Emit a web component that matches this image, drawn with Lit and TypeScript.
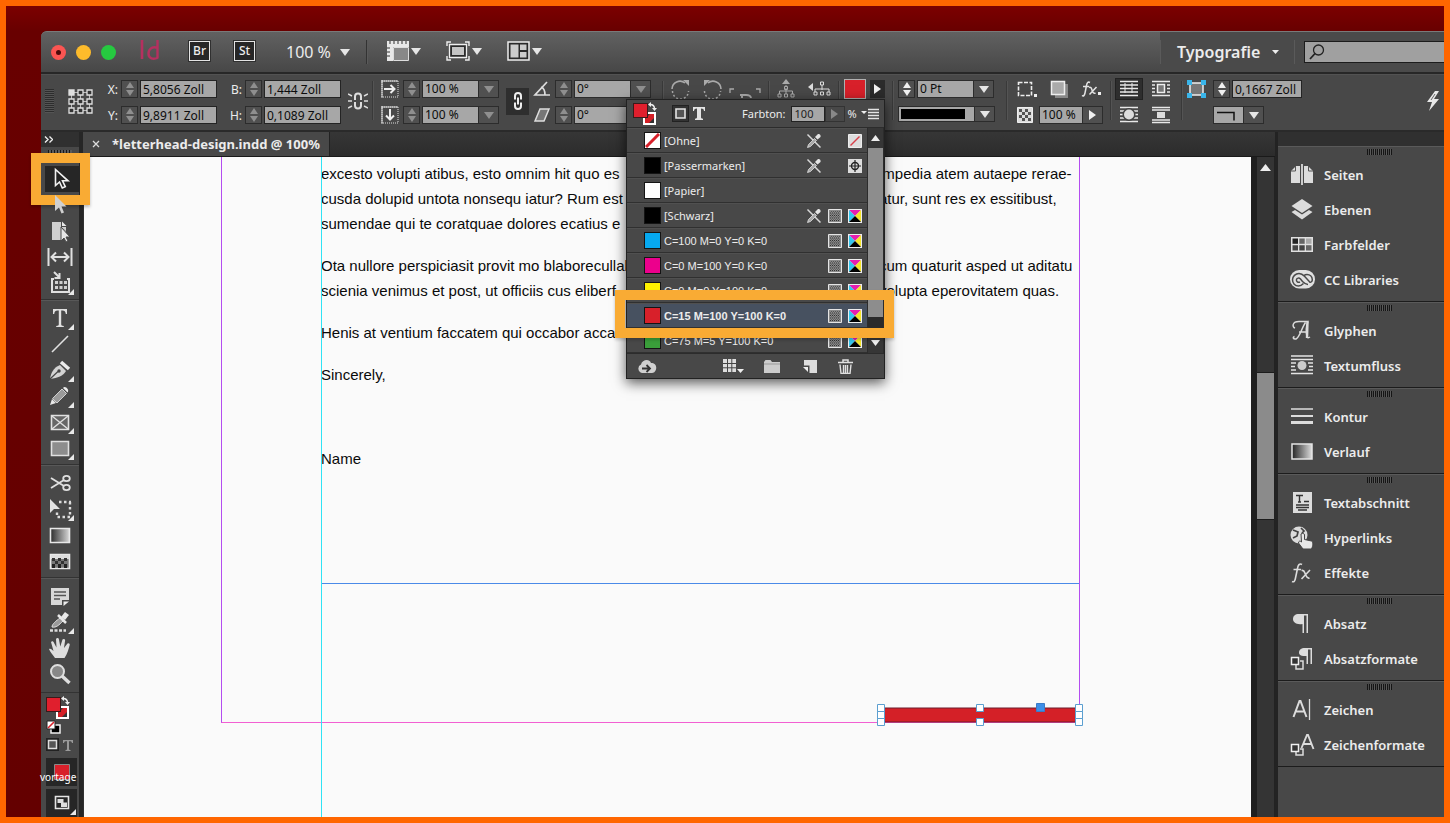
import { LitElement, html, svg, css, SVGTemplateResult, TemplateResult } from "lit";
import { customElement, state } from "lit/decorators.js";
import { classMap } from "lit/directives/class-map.js";
import { styleMap } from "lit/directives/style-map.js";

const icon = (w: number, h: number, body: SVGTemplateResult) =>
  html`<svg width=${w} height=${h} viewBox="0 0 ${w} ${h}" fill="none" stroke="none" aria-hidden="true">${body}</svg>`;

const L = "#dcdcdc";
const corner = svg`<path d="M29 19v6h-6z" fill="#e8e8e8"/>`;

/* ---------- shared glyphs ---------- */
const triDown = (c = "#e6e6e6") => icon(10, 8, svg`<path d="M0 1h10L5 8z" fill=${c}/>`);
const triRight = (c = "#f0f0f0") => icon(7, 10, svg`<path d="M0 0l7 5-7 5z" fill=${c}/>`);
const fillStroke = svg`
  <path d="M10 10h13v13H10z" fill="#fff"/><path d="M12 12h9v9h-9z" fill="#333"/>
  <path d="M12 21v-4l5-5h4v4l-5 5z" fill="#d42027"/>
  <path d="M0 1h15v15H0z" fill="#3a1a1a"/><path d="M1 2h13v13H1z" fill="#e01f2d"/>
  <path d="M17 2.500c3 0 4.500 1.500 4.500 4.500" stroke="#eee" stroke-width="1.500"/><path d="M18 0v5l-3-2.500zM19 6h5l-2.500 3z" fill="#eee"/>`;

/* ---------- toolbox ---------- */
const tools: Record<string, SVGTemplateResult> = {
  Auswahl: svg`<path d="M10.500 3.500v16l4-3.500 2.800 6 3-1.400-2.800-5.800h5.500z" fill="#222" stroke="#f2f2f2" stroke-width="1.600"/>`,
  Direktauswahl: svg`<path d="M10 3v16l4-3.500 2.500 6 2.500-1-2.500-6h5z" fill="#d0d0d0"/>`,
  Seite: svg`<path d="M7 4h9v5h5v4l-6-5v14H7z" fill="#cfcfcf"/><path d="M7 4h9v6l5 3-5 9H7z" fill="#cfcfcf"/><path d="M17 3.500l4.500 4.500H17z" fill="#e8e8e8"/><path d="M16 9v14l3-3 2 4 2-1-2-4h4z" fill="#e6e6e6" stroke="#484848"/>`,
  Lücke: svg`<path d="M3.500 4v18M26.500 4v18" stroke="#e0e0e0" stroke-width="2"/><path d="M8 13h14" stroke="#e0e0e0" stroke-width="2"/><path d="M11 8.500L6.500 13l4.500 4.500M19 8.500l4.500 4.500-4.500 4.500" stroke="#e0e0e0" stroke-width="2"/>`,
  Inhaltsaufnahme: svg`<path d="M9 2l5 5M14.500 3v5h-5" stroke="#e0e0e0" stroke-width="2"/><path d="M9 9H7v13h17V9h-2" stroke="#e0e0e0" stroke-width="2"/><path d="M10 11h3v3h-3zM14.500 11h3v3h-3zM19 11h3v3h-3zM10 16h3v3h-3zM14.500 16h3v3h-3zM19 16h3v3h-3z" fill="#cfcfcf"/>${corner}`,
  Text: svg`<path d="M8 4h14v5h-1.200c-.4-2.600-1.300-3.400-3.300-3.500h-1.300v13.500c0 1.500.5 1.800 2.600 2v1h-7.600v-1c2.100-.2 2.600-.5 2.600-2V5.500h-1.300c-2 .1-2.900.9-3.300 3.500H8z" fill="#e0e0e0"/>${corner}`,
  Linie: svg`<path d="M7 21L23 5" stroke="#e0e0e0" stroke-width="1.600"/>`,
  Zeichenstift: svg`<path d="M5 22c1-6 3-11 10-14l6 6c-3 5-8 7-16 8z" fill="#d2d2d2"/><path d="M16 5l8 7" stroke="#ececec" stroke-width="3.500"/><path d="M5 22l8-7.500" stroke="#444" stroke-width="1.200"/><circle cx="14" cy="14" r="1.700" fill="#444"/>${corner}`,
  Buntstift: svg`<path d="M5 22l2-6 4 4z" fill="#e8e8e8"/><path d="M7.500 15.500L17 6l4.500 4.500-9.500 9.500z" fill="#9a9a9a" stroke="#cfcfcf"/><path d="M18 5c2-3 7 2 4.500 4.500z" fill="#ececec"/>${corner}`,
  Rechteckrahmen: svg`<path d="M6.500 6.500h17v14h-17z" fill="#666" stroke="#e0e0e0" stroke-width="1.600"/><path d="M7 7l16 13M23 7L7 20" stroke="#e0e0e0" stroke-width="1.400"/>${corner}`,
  Rechteck: svg`<path d="M6.500 6.500h17v14h-17z" fill="#8d8d8d" stroke="#e0e0e0" stroke-width="1.600"/>${corner}`,
  Schere: svg`<path d="M6 8l13 8M6 18l13-8" stroke="#e0e0e0" stroke-width="1.800"/><ellipse cx="21.500" cy="8.500" rx="3.300" ry="2.600" stroke="#e0e0e0" stroke-width="1.800"/><ellipse cx="21.500" cy="17.500" rx="3.300" ry="2.600" stroke="#e0e0e0" stroke-width="1.800"/>`,
  Transformieren: svg`<path d="M5 3v14l4-4h6z" fill="#e4e4e4"/><path d="M14 6h12M25 6v15H12v-6" stroke="#dcdcdc" stroke-width="2.400" stroke-dasharray="2.500 2.500"/>${corner}`,
  Verlaufsfarbfeld: svg`<defs><linearGradient id="g1"><stop stop-color="#2b2b2b"/><stop offset="1" stop-color="#d8d8d8"/></linearGradient></defs><path d="M5.500 6.500h19v14h-19z" fill="url(#g1)" stroke="#e8e8e8" stroke-width="1.600"/>`,
  "Weiche Verlaufskante": svg`<path d="M5.500 6.500h19v14h-19z" fill="#777" stroke="#e8e8e8" stroke-width="1.600"/><path d="M6 7h18v4H6z" fill="#ddd"/><path d="M7 10h3v3H7zM13 10h3v3h-3zM19 10h3v3h-3zM10 13h3v3h-3zM16 13h3v3h-3z" fill="#333"/><path d="M7 16h3v4H7zM13 16h3v4h-3zM19 16h3v4h-3z" fill="#222"/>`,
  Notiz: svg`<path d="M6 5h18v12h-7v5H6z" fill="#d8d8d8"/><path d="M18.500 18.500H24l-5.500 4.500z" fill="#ececec"/><path d="M9 9h12M9 12.500h12M9 16h6" stroke="#555" stroke-width="1.500"/>`,
  Pipette: svg`<path d="M7 18c0-3 4-6 8-9l3 3c-4 4-7 7-11 6z" fill="#9a9a9a" stroke="#e0e0e0"/><path d="M13 6l8 8" stroke="#e8e8e8" stroke-width="2.500"/><path d="M16 8l4-5 4 3-4 5z" fill="#e8e8e8"/><path d="M5 21.500h16" stroke="#dcdcdc" stroke-width="2.500" stroke-dasharray="3 1.500"/>${corner}`,
  Hand: svg`<path d="M10 23c-2-3-5-6-6-9 1.500-1 3 .5 4.500 2L6 7c1-1.500 2.500-.8 2.800.5l2.700 5L11 4c.8-1.500 2.700-1.200 2.900.3l1.400 7.200L17.500 4.500c1-1.200 2.800-.5 2.600 1L19 13l3.500-4.500c1.300-.8 2.600.3 2.200 1.500-1.200 4-2.200 9-5.200 13z" fill="#dedede"/>`,
  Zoom: svg`<circle cx="12.500" cy="10.500" r="6.500" fill="#888" stroke="#dedede" stroke-width="2"/><path d="M17 15l7.500 7" stroke="#dedede" stroke-width="3.500"/>`,
};
const toolGroups = [
  ["Auswahl", "Direktauswahl", "Seite", "Lücke", "Inhaltsaufnahme"],
  ["Text", "Linie", "Zeichenstift", "Buntstift", "Rechteckrahmen", "Rechteck"],
  ["Schere", "Transformieren", "Verlaufsfarbfeld", "Weiche Verlaufskante"],
  ["Notiz", "Pipette", "Hand", "Zoom"],
];

/* ---------- dock panels ---------- */
const panels: [string, SVGTemplateResult][][] = [
  [
    ["Seiten", svg`<path d="M1 8l5-5h4v17H1zM23 8l-5-5h-4v17h9z" fill=${L}/><path d="M12 1v21" stroke="#eee" stroke-width="1.600"/><path d="M5.500 3v5H1M18.500 3v5H23" stroke="#555"/>`],
    ["Ebenen", svg`<path d="M12 1l10.500 7L12 15 1.500 8z" fill=${L}/><path d="M1.500 14l3.500-2 7 4.500 7-4.500 3.500 2L12 21.500z" fill=${L}/>`],
    ["Farbfelder", svg`<path d="M1 4h22v15H1z" fill="#e0e0e0"/><path d="M2.500 5.500H8v5.300H2.500z" fill="#222"/><path d="M9.300 5.500h5.400v5.300H9.300z" fill="#666"/><path d="M16 5.500h5.500v5.300H16z" fill="#aaa"/><path d="M2.500 12.200H8v5.300H2.500zM9.300 12.200h5.400v5.300H9.300z" fill="#444"/><path d="M16 12.200h5.500v5.300H16z" fill="#666"/>`],
    ["CC Libraries", svg`<rect x="0" y="2" width="25" height="18.500" rx="9.200" fill="#e0e0e0"/><path d="M13.500 15.500c-1.500 1.500-3 2.500-5 2.500-3.500 0-6-2.800-6-6.200S5.500 5.500 9 5.500c2.300 0 4 1.200 5.500 2.800l5 5.500c1.200 1 3-.3 2.800-2.300-.2-3-2.500-5-5.300-5-1.500 0-2.300.4-3 1" stroke="#4a4a4a" stroke-width="1.500"/><path d="M18 16.500c-2.500 0-4-1.500-5.500-3L10.500 11c-1.500-1.500-3.500-1-4 .5-.5 2 1.500 3.500 3.500 2.500" stroke="#4a4a4a" stroke-width="1.500"/>`],
  ],
  [
    ["Glyphen", svg`<path d="M5 9c-3-1-3-6.500 4-6.500h9c-2 5-2 11-1 15 .3 1.500 1.500 1.500 3 .5M15.500 3.500C12 8 10 18 6 20c-3 .5-3.500-2-1.500-2.500M9 13h8" stroke=${L} stroke-width="1.500"/><path d="M17.500 3L17 19" stroke=${L} stroke-width="2.400"/>`],
    ["Textumfluss", svg`<path d="M1 2h22M1 5.500h22M1 9h5M18 9h5M1 12.500h4M19 12.500h4M1 16h5M18 16h5M1 19.500h22" stroke="#e4e4e4" stroke-width="1.500"/><circle cx="12" cy="11.500" r="4.500" fill="#ccc"/>`],
  ],
  [
    ["Kontur", svg`<path d="M1 4h22" stroke=${L} stroke-width="1.500"/><path d="M1 11h22" stroke=${L} stroke-width="2"/><path d="M1 17.500h22" stroke=${L} stroke-width="3"/>`],
    ["Verlauf", svg`<defs><linearGradient id="g2"><stop stop-color="#222"/><stop offset="1" stop-color="#ddd"/></linearGradient></defs><path d="M2 4h20v15H2z" fill="url(#g2)" stroke="#e4e4e4" stroke-width="1.500"/>`],
  ],
  [
    ["Textabschnitt", svg`<path d="M3 1h19v21H3z" fill=${L}/><path d="M6 4.500h7M9.500 4.500V11M8 11h3M14 10.500h5M6 14h13M6 16.500h13M8 19h9" stroke="#333" stroke-width="1.400"/>`],
    ["Hyperlinks", svg`<circle cx="9" cy="9" r="8.500" fill=${L}/><path d="M3 4l5 2-1 4-4 2M11 2l3 3-2 2" stroke="#444" stroke-width="1.700"/><path d="M11 8c1.500-1.500 3.500-.5 3.500 1v4.500l7 1.500c2 1 1.500 5 0 8H13l-4.500-6c0-2 1.500-2.500 3-1z" fill="#e8e8e8" stroke="#444"/>`],
    ["Effekte", svg`<path d="M12 3.500c-2.500-1.500-4 .5-4.500 4L5.500 17c-.5 3-1.500 4.500-3.500 3.500M3.500 8.500H11M11.500 9.500c3-1 3 2 4 4s1.500 4.500 4 3.500M20 9l-8.500 9" stroke=${L} stroke-width="1.600"/>`],
  ],
  [
    ["Absatz", svg`<path d="M9 2h9v19h-1.500V3.500H14V21h-1.500v-9C6 13 3 10 3 7s2-5 6-5z" fill=${L}/>`],
    ["Absatzformate", svg`<path d="M15 1h7v16h-1.500V2.500H18V17h-1.500V9C11 9.500 9 8 9 5.500S11 1 15 1z" fill=${L}/><path d="M6 16v6h7v-8h-3" stroke=${L} stroke-width="1.500"/><path d="M1.500 10.500h7v7h-7z" fill="#333" stroke="#eee" stroke-width="1.500"/>`],
  ],
  [
    ["Zeichen", svg`<path d="M3.500 19L9.500 3h1l6 16M5.500 13.500h9" stroke=${L} stroke-width="2"/><path d="M19.500 1v21" stroke=${L} stroke-width="1.300"/>`],
    ["Zeichenformate", svg`<path d="M11.500 15L17 2h1l5.500 14M13.500 11h8" stroke=${L} stroke-width="1.900"/><path d="M6 17v5h7v-6h-3" stroke=${L} stroke-width="1.500"/><path d="M1.500 11.500h7v7h-7z" fill="#333" stroke="#eee" stroke-width="1.500"/>`],
  ],
];

/* ---------- swatches ---------- */
const icNoEdit = icon(16, 16, svg`<path d="M1.500 1.500l13 13" stroke="#d8d8d8" stroke-width="1.500"/><path d="M1.500 14.500l1-3 6-6 2 2-6 6z" fill="#aaa" stroke="#e0e0e0" stroke-width=".8"/><path d="M9 4l3-3c2-.5 3 1.500 2.500 3l-3 2.500z" fill="#e4e4e4"/>`);
const icSpot = icon(14, 14, svg`<path d="M.5.500h13v13H.5z" fill="#8a8a8a" stroke="#e4e4e4"/><path d="M2 4h10M2 6.500h10M2 9h10M2 11.500h10" stroke="#333" stroke-dasharray="1 1"/><path d="M3 2.500h10M3 5.200h10M3 7.800h10M3 10.300h10" stroke="#555" stroke-dasharray="1 1"/>`);
const icCmyk = icon(14, 14, svg`<path d="M0 0h14v14H0z" fill="#eee"/><path d="M1 1h12L7 7z" fill="#e61fb0"/><path d="M1 1l6 6-6 6z" fill="#35c6ee"/><path d="M13 1v12L7 7z" fill="#f4e52a"/><path d="M1 13h12L7 7z" fill="#000"/>`);
const icNone = icon(14, 14, svg`<path d="M.5.500h13v13H.5z" fill="#ddd" stroke="#eee"/><path d="M2.500 11.500l9-9" stroke="#d8404a" stroke-width="1.500"/>`);
const icReg = icon(14, 14, svg`<path d="M0 0h14v14H0z" fill="#ddd"/><circle cx="7" cy="7" r="3.500" stroke="#222" stroke-width="1.400"/><path d="M7 1v12M1 7h12" stroke="#222" stroke-width="1.200"/>`);
interface Swatch { name: string; color: string; fixed?: boolean; kind?: TemplateResult; process?: boolean; latin?: boolean }
const swatches: Swatch[] = [
  { name: "[Ohne]", color: "none", fixed: true, kind: icNone },
  { name: "[Passermarken]", color: "#000", fixed: true, kind: icReg },
  { name: "[Papier]", color: "#fff" },
  { name: "[Schwarz]", color: "#000", fixed: true, process: true, kind: icCmyk },
  { name: "C=100 M=0 Y=0 K=0", color: "#06a9f0", process: true, kind: icCmyk, latin: true },
  { name: "C=0 M=100 Y=0 K=0", color: "#ec008c", process: true, kind: icCmyk, latin: true },
  { name: "C=0 M=0 Y=100 K=0", color: "#fff200", process: true, kind: icCmyk, latin: true },
  { name: "C=15 M=100 Y=100 K=0", color: "#d8202a", process: true, kind: icCmyk, latin: true },
  { name: "C=75 M=5 Y=100 K=0", color: "#3a9e3a", process: true, kind: icCmyk, latin: true },
];

@customElement("app-root")
export class AppRoot extends LitElement {
  @state() private tool = "Auswahl";
  @state() private swatch = "C=15 M=100 Y=100 K=0";

  static styles = css`
    :host {
      display: block; box-sizing: border-box; height: 100vh; overflow: hidden;
      border: 6px solid #ff6600; padding: 25px 0 0 35px;
      background: linear-gradient(#7c0000, #680000 25px, #640000);
      font-family: "Noto Sans", "Open Sans", sans-serif; font-size: 12px; color: #ececec;
    }
    *, *::before { box-sizing: border-box; }
    svg { display: block; flex: none; }
    button, input, select { font: inherit; color: inherit; margin: 0; padding: 0; border: 0; border-radius: 0; background: none; appearance: none; }
    button { display: flex; align-items: center; justify-content: center; }
    ul { list-style: none; margin: 0; padding: 0; }
    .window { height: 100%; display: flex; flex-direction: column; background: #484848; border-top-left-radius: 6px; }

    .title { display: flex; height: 43px; flex: none; border-bottom: 2px solid #272727; border-top: 1px solid #7a7a7a; border-top-left-radius: 6px; background: linear-gradient(#616161, #474747); }
    .left { flex: 1; display: flex; align-items: center; padding-left: 10px; }
    .dot { width: 15px; height: 15px; border-radius: 50%; margin-right: 10px; display: grid; place-items: center; }
    .red { background: #fb5552; } .amber { background: #fdbb2b; } .green { background: #26c940; }
    .red::before { content: ""; width: 5px; height: 5px; border-radius: 50%; background: #4c0a0a; }
    .logo { margin: 0 29px 4px 14px; }
    .app { width: 21px; height: 20px; border: 1px solid #e4e4e4; background: #262626; font-size: 12px; font-weight: 500; margin: 0 24px 3px 0; outline: 1px solid #303030; }
    .zoom { display: flex; align-items: center; gap: 7px; margin-left: 7px; font-size: 16px; }
    .zoom select { width: 47px; }
    .rule { width: 1px; align-self: stretch; background: #333; border-right: 1px solid #5a5a5a; box-sizing: content-box; }
    .title .rule { margin: 8px 19px 8px 16px; }
    .view { gap: 2px; margin: 0 25px 3px 0; }
    .right { width: 284px; flex: none; display: flex; align-items: center; background: #4a4a4a; }
    .title .right .rule { margin: 8px 0; }
    .workspace { margin-left: 16px; gap: 12px; font-size: 16px; font-weight: 600; width: 98px; justify-content: flex-start; }
    .title .right .second { margin: 8px 9px 8px 19px; }
    .search { flex: 1; height: 22px; display: flex; align-items: center; background: #a0a0a0; border: 1px solid #1c1c1c; border-right: 0; padding-left: 4px; }
    .search input { flex: 1; min-width: 0; color: #111; }

    .control { position: relative; z-index: 3; height: 58px; flex: none; display: flex; padding: 5px 0 8px 4px; border-bottom: 2px solid #2a2a2a; border-top: 1px solid #525252; }
    .grip { width: 9px; height: 24px; margin-top: 9px; background: repeating-linear-gradient(#222 0 1px, #5a5a5a 1px 2px); opacity: .7; }
    .pair { display: flex; flex-direction: column; gap: 8px; }
    .row { display: flex; align-items: center; height: 18px; gap: 2px; }
    .row label { width: 16px; margin-right: 1px; text-align: right; }
    .row .glyph { width: 18px; margin-right: 2px; display: grid; place-items: center; }
    .step { display: grid; width: 17px; height: 18px; border: 1px solid #2c2c2c; background: #505050; }
    .step button { height: 8px; }
    .num { width: 77px; height: 18px; background: #a7a7a7; border: 1px solid #242424; color: #0c0c0c; padding: 0 2px; font-size: 12px; line-height: 16px; }
    .combo { display: flex; height: 18px; border: 1px solid #2c2c2c; background: #505050; align-self: flex-start; }
    .combo select, .combo .val { width: 56px; background: #a7a7a7; color: #0c0c0c; padding-left: 2px; font-size: 12px; line-height: 16px; border-right: 1px solid #2c2c2c; }
    .combo .opacity { width: 43px; }
    .combo .edge { width: 30px; }
    .combo .drop { flex: 1; min-width: 19px; align-self: stretch; display: grid; place-items: center; }
    .mid { align-self: center; }
    .control > .rule { margin-block: 1px 2px; opacity: .7; }
    .g4 { margin-left: 4px; } .g7 { margin-left: 7px; } .g9 { margin-left: 9px; }
    .g11 { margin-left: 11px; } .g14 { margin-left: 14px; }
    .link { width: 23px; height: 27px; background: #2e2e2e; }
    .sw { width: 22px; height: 20px; background: #d8202a; border: 1px solid #b0b0b0; }
    .play { width: 15px; height: 18px; background: #2b2b2b; margin-left: 2px; }
    .mid-num { width: 70px; }
    .pressed { background: #2e2e2e; outline: 1px solid #222; }
    .wrap { display: grid; grid-template-columns: 26px 26px; column-gap: 6px; row-gap: 6px; margin-block: -1px; }
    .wrap button { height: 20px; }
    .flash { margin: 0 4px 0 auto; }
    .icons { gap: 13px; }
    .stroke { width: 97px; }
    .stroke .val { flex: none; width: 76px; display: grid; align-items: center; align-self: stretch; }
    .bar { height: 10px; width: 64px; background: #000; }

    .pop { position: absolute; left: 585px; top: 24px; width: 259px; background: #484848; border: 1px solid #222; box-shadow: 0 4px 12px rgba(0, 0, 0, .65); font-size: 11px; }
    .head { height: 28px; display: flex; align-items: center; padding-left: 6px; border-bottom: 1px solid #2c2c2c; }
    .head .fs { margin-right: 14px; }
    .head label { margin: 0 5px 0 37px; }
    .fmt { width: 17px; height: 17px; border: 1px solid #222; background: #333; margin-right: 4px; }
    .tint { width: 34px; height: 16px; background: #a7a7a7; color: #222; border: 1px solid #222; padding-left: 3px; }
    .tintgo { width: 20px; height: 16px; border: 1px solid #333; margin-right: 3px; }
    .menu { margin-left: 4px; }
    .body { display: flex; }
    .list { flex: 1; }
    .list li { border-bottom: 1px solid #303030; height: 25px; }
    .list button { width: 100%; height: 24px; justify-content: flex-start; padding: 0 5px 0 17px; gap: 6px; border-top: 1px solid #505050; }
    .list .chip { width: 17px; height: 17px; border: 1px solid #141414; margin-right: -3px; display: grid; place-items: center; }
    .list .name { flex: 1; text-align: left; }
    .list .blank { width: 14px; }
    .list .latin { font-family: "Liberation Sans", Arial, sans-serif; }
    .list .on { background: #475160; font-weight: 700; }
    .vbar { width: 17px; background: #8d8d8d; border: solid #2c2c2c; border-width: 0 1px 0 1px; display: flex; flex-direction: column; }
    .vbar button { height: 20px; background: #363636; }
    .vbar .void { height: 16px; margin-top: auto; background: #2a2a2a; }
    .foot { height: 25px; display: flex; align-items: center; padding: 0 31px 0 10px; border-top: 1px solid #2c2c2c; }
    .foot button { margin-left: 20px; }
    .foot .first { margin: 0 auto 0 0; }
    .ring { position: absolute; left: -12px; top: 190px; width: 279px; height: 48px; border: 10px solid #f9ab34; box-shadow: 0 2px 3px rgba(0, 0, 0, .2); pointer-events: none; }

    .main { flex: 1; min-height: 0; display: grid; grid-template-columns: 42px minmax(0, 1fr) 169px; }
    .toolbox { position: relative; z-index: 2; background: #484848; border-right: 4px solid #262626; }
    .collapse { height: 15px; background: #303030; display: flex; align-items: center; padding-left: 3px; width: 100%; justify-content: flex-start; }
    .tgrip { height: 6px; width: 24px; margin: 3px auto 10px 7px; background: repeating-linear-gradient(90deg, #181818 0 1px, #5a5a5a 1px 3px); }
    .tools + .tools { border-top: 1px solid #333; padding-top: 5px; margin-top: 3px; box-shadow: inset 0 1px #585858; }
    .tools button { width: 34px; height: 26px; margin-left: 4px; padding-right: 4px; position: relative; }
    .tools .active { background: #262626; }
    .mark { position: absolute; left: -14px; top: -13px; width: 59px; height: 52px; border: 10px solid #f9ab34; box-shadow: 0 2px 3px rgba(0, 0, 0, .25); }
    .bottom { display: grid; padding: 3px 0 0 5px; border-top: 1px solid #333; margin-top: 5px; position: relative; justify-items: start; }
    .modes { display: flex; gap: 3px; margin: 4px 0 7px; }
    .well { width: 31px; height: 28px; background: #262626; }
    .well + .well { margin-top: 3px; }
    .brand { position: absolute; left: -1px; top: 77px; font-size: 10px; line-height: 14px; color: #fff; }

    .doc { display: grid; grid-template-rows: 25px minmax(0, 1fr); background: #303030; min-width: 0; }
    .tabs { display: flex; background: linear-gradient(#363636, #2c2c2c); border-bottom: 1px solid #1a1a1a; }
    .tab { display: flex; align-items: center; gap: 12px; padding: 0 9px; background: #484848; font-weight: 700; font-size: 13px; border-right: 1px solid #222; }
    .view-area { display: grid; grid-template-columns: minmax(0, 1fr) 24px; padding-left: 1px; }
    .canvas { background: #fafafa; position: relative; overflow: hidden; display: flex; flex-direction: column; }
    .frame { height: 566px; flex: none; margin: 0 171px 0 137px; border: solid #b44df0; border-width: 0 1px 1px; border-bottom-color: #f25fd2; position: relative; }
    .textbox { margin-left: 99px; height: 427px; border-bottom: 1px solid #4a8ae8; padding: 4px 0 0; font: 15px/25px "Liberation Sans", Arial, sans-serif; color: #0a0a0a; }
    .textbox p { margin: 0 0 17px; }
    .textbox .sign { margin-bottom: 59px; }
    .line { display: grid; grid-template-columns: 558px 1fr; white-space: nowrap; }
    .guide { position: absolute; left: 237px; top: 0; bottom: 0; width: 1px; background: #2fe3f5; }
    .object { position: absolute; right: -5px; bottom: -5px; }
    .scroll { border-left: 6px solid #1f1f1f; background: #343434; border-right: 1px solid #222; display: flex; flex-direction: column; }
    .scroll button { height: 20px; }
    .thumb { margin-top: 195px; height: 148px; background: #8b8b8b; border: solid #1c1c1c; border-width: 1px 0; }

    .dock { background: #484848; border-left: 3px solid #232323; overflow: hidden; }
    .dockhead { height: 14px; background: #303030; }
    .group { border-top: 1px solid #5a5a5a; border-bottom: 1px solid #1c1c1c; padding-bottom: 4px; }
    .pgrip { display: block; width: 25px; height: 6px; margin: 2px 0 2px 89px; background: repeating-linear-gradient(90deg, #151515 0 1px, #4a4a4a 1px 2px, #151515 2px 3px, #5a5a5a 3px 4px); }
    .group button { height: 35px; width: 100%; justify-content: flex-start; gap: 9px; padding-left: 12px; font-size: 13px; font-weight: 600; white-space: nowrap; }
  `;

  private step(dim = true) {
    const c = dim ? "#8f8f8f" : "#f0f0f0";
    return html`<span class="step">
      <button aria-label="Erhöhen">${icon(8, 6, svg`<path d="M0 6h8L4 0z" fill=${c}/>`)}</button>
      <button aria-label="Verringern">${icon(8, 6, svg`<path d="M0 0h8L4 6z" fill=${c}/>`)}</button>
    </span>`;
  }
  private field(id: string, label: string, value: string) {
    return html`<div class="row"><label for=${id}>${label}</label>${this.step()}<input class="num" id=${id} .value=${value} /></div>`;
  }
  private combo(glyph: SVGTemplateResult, label: string, value: string) {
    return html`<div class="row"><span class="glyph">${icon(18, 18, glyph)}</span>${this.step()}
      <span class="combo"><select aria-label=${label}><option>${value}</option></select><span class="drop">${triDown("#8f8f8f")}</span></span></div>`;
  }

  private titleBar() {
    return html`<header class="title">
      <div class="left">
        <button class="dot red" aria-label="Schließen"></button><button class="dot amber" aria-label="Minimieren"></button><button class="dot green" aria-label="Maximieren"></button>
        <span class="logo">${icon(20, 20, svg`<path d="M2 0v19" stroke="#b5305f" stroke-width="2.600"/><path d="M17.500 0v18.500M17.500 8c-4-2-9 0-9 5.500s5 6 9 4.500" stroke="#b5305f" stroke-width="2.400"/>`)}</span>
        <button class="app">Br</button><button class="app">St</button>
        <span class="zoom"><select aria-label="Zoomstufe"><option>100 %</option></select>${triDown()}</span>
        <span class="rule"></span>
        <button class="view" aria-label="Anzeigeoptionen">${icon(22, 20, svg`<path d="M0 0h22v6H6v14H0z" fill="#e8e8e8"/><path d="M6.500 6.500h15v13h-15z" fill="#888" stroke="#ddd"/><path d="M3 0v3M7 0v3M11 0v3M15 0v3M19 0v3M0 7h3M0 11h3M0 15h3" stroke="#333"/>`)}${triDown()}</button>
        <button class="view" aria-label="Bildschirmmodus">${icon(24, 20, svg`<path d="M3.500 3.500h17v13h-17z" fill="#2a2a2a" stroke="#eee" stroke-width="1.300"/><path d="M6 6h12v8H6z" fill="#c4c4c4"/><path d="M1 5V1h4M19 1h4v4M23 15v4h-4M5 19H1v-4" stroke="#eee" stroke-width="1.400"/>`)}${triDown()}</button>
        <button class="view" aria-label="Dokumente anordnen">${icon(23, 20, svg`<path d="M1 1h21v18H1z" fill="#2b2b2b" stroke="#eee" stroke-width="1.500"/><path d="M3.500 3.500h8v13h-8z" fill="#ccc"/><path d="M13 3.500h6.500v5.500H13zM13 11h6.500v5.500H13z" fill="#ccc"/>`)}${triDown()}</button>
      </div>
      <div class="right">
        <span class="rule"></span>
        <button class="workspace">Typografie ${icon(7, 4, svg`<path d="M0 0h7L3.500 4z" fill="#eee"/>`)}</button>
        <span class="rule second"></span>
        <label class="search">${icon(16, 16, svg`<circle cx="9.500" cy="6" r="5" stroke="#222" stroke-width="1.300"/><path d="M6 9.500L1 15" stroke="#222" stroke-width="1.800"/>`)}<input type="search" aria-label="Suchen" /></label>
      </div>
    </header>`;
  }

  private controlBar() {
    const dots = [0, 9, 18].flatMap((y) => [0, 9, 18].map((x) => svg`<path d="M${x + 1} ${y + 1}h5v5h-5z" stroke="#e0e0e0" stroke-width="1.300" fill=${x + y ? "#333" : "#ddd"}/>`));
    const tree = svg`<path d="M9 9v3M2.500 15v-3h13v3M9 12v3" stroke="#aaa"/><path d="M7.500 7.500h3v3h-3zM1 15h3v3H1zM7.500 15h3v3h-3zM14 15h3v3h-3z" stroke="#aaa"/><path d="M9 6v2" stroke="#aaa"/><path d="M5 5h8L9 0z" fill="#aaa"/>`;
    const wrapLines = svg`<path d="M0 1.500h18M0 5h18M0 8.500h18M0 12h18M0 15.500h18" stroke="#e8e8e8" stroke-width="1.500"/>`;
    return html`<div class="control">
      <span class="grip"></span>
      <button class="mid g14" aria-label="Bezugspunkt">${icon(25, 25, svg`<path d="M4 3.500h16M4 12.500h16M4 21.500h16M3.500 4v16M12.500 4v16M21.500 4v16" stroke="#bbb"/>${dots}`)}</button>
      <div class="pair g9">${this.field("x", "X:", "5,8056 Zoll")}${this.field("y", "Y:", "9,8911 Zoll")}</div>
      <div class="pair g9">${this.field("b", "B:", "1,444 Zoll")}${this.field("h", "H:", "0,1089 Zoll")}</div>
      <button class="mid g7" aria-label="Proportionen">${icon(20, 20, svg`<path d="M7 9V5.500a3 3 0 0 1 6 0V9M7 11v3.500a3 3 0 0 0 6 0V11" stroke="#ddd" stroke-width="2"/><path d="M0 3l4 2M0 10h4M0 17l4-2M20 3l-4 2M20 10h-4M20 17l-4-2" stroke="#ddd" stroke-width="1.500"/>`)}</button>
      <span class="rule g4"></span>
      <div class="pair g7">
        ${this.combo(svg`<path d="M1 1h16v16H1z" stroke="#ddd" stroke-dasharray="1 1"/><path d="M1 0v18M0 1h17" stroke="#ddd"/><path d="M3 9h10M9.500 5l4 4-4 4" stroke="#eee" stroke-width="2"/>`, "X-Skalierung", "100 %")}
        ${this.combo(svg`<path d="M1 1h16v16H1z" stroke="#ddd" stroke-dasharray="1 1"/><path d="M1 0v18M0 1h17" stroke="#ddd"/><path d="M9 3v10M5 9.500l4 4 4-4" stroke="#eee" stroke-width="2"/>`, "Y-Skalierung", "100 %")}
      </div>
      <button class="link mid g7" aria-label="Verketten">${icon(12, 20, svg`<path d="M3 8.500V5a3 3 0 0 1 6 0v3.500M3 11.500V15a3 3 0 0 0 6 0v-3.500" stroke="#eee" stroke-width="2"/><path d="M6 6.500v7" stroke="#eee" stroke-width="2"/>`)}</button>
      <div class="pair g4">
        ${this.combo(svg`<path d="M14 2L2 15h15M8 7c3 1 4 4 4 8" stroke="#ddd" stroke-width="1.700"/>`, "Drehwinkel", "0°")}
        ${this.combo(svg`<path d="M7 3h9l-5 12H2z" fill="#777" stroke="#ddd" stroke-width="1.500"/>`, "Scherwinkel", "0°")}
      </div>
      <span class="rule g11"></span>
      <div class="row icons g7">
        ${icon(19, 19, svg`<path d="M1 9a8 8 0 0 1 13-6" stroke="#aaa" stroke-width="1.600"/><path d="M12 0h6v6z" fill="#aaa"/><path d="M1.500 11a8 8 0 0 0 16 0" stroke="#aaa" stroke-width="1.500" stroke-dasharray="2 2"/>`)}
        ${icon(19, 19, svg`<path d="M18 9A8 8 0 0 0 5 3" stroke="#aaa" stroke-width="1.600"/><path d="M7 0H1v6z" fill="#aaa"/><path d="M1.500 11a8 8 0 0 0 16 0" stroke="#aaa" stroke-width="1.500" stroke-dasharray="2 2"/>`)}
      </div>
      <div class="row g7">${icon(32, 18, svg`<path d="M1 13V9h4M27 9h4v4" stroke="#aaa" stroke-width="1.300"/><path d="M11 15h6c4 0 5 1 5 4M13 15v4" stroke="#aaa" stroke-width="2"/>`)}</div>
      <span class="rule g7"></span>
      <div class="row icons g7">${icon(18, 20, tree)}${icon(23, 18, svg`<path d="M14 5v5M7 12v-3h14v3" stroke="#ddd"/><path d="M12.500 2h3v3h-3zM6 12h3v3H6zM12.500 12h3v3h-3zM19 12h3v3h-3z" stroke="#ddd"/><path d="M5 3v8L0 7z" fill="#ddd"/>`)}</div>
      <span class="rule g7"></span>
      <div class="row g4"><button class="sw" aria-label="Fläche"></button><button class="play" aria-label="Farbfelder öffnen">${triRight()}</button></div>
      <span class="rule g7"></span>
      <div class="pair g4">
        <div class="row">${this.step(false)}<span class="combo"><select aria-label="Konturstärke"><option>0 Pt</option></select><span class="drop">${triDown()}</span></span></div>
        <button class="combo stroke" aria-label="Konturart"><span class="val"><span class="bar"></span></span><span class="drop">${triDown()}</span></button>
      </div>
      <span class="rule g11"></span>
      <div class="pair g9">
        <div class="row icons">
          ${icon(20, 18, svg`<path d="M1.500 2.500h13v13h-13z" stroke="#eee" stroke-width="1.600" stroke-dasharray="4 1.500"/><path d="M17 14h3v3h-3z" fill="#eee"/>`)}
          ${icon(18, 18, svg`<path d="M5 4h13v14H5z" fill="#888"/><path d="M1.500 1.500h13v13h-13z" fill="#aaa" stroke="#eee" stroke-width="1.500"/>`)}
          ${icon(20, 18, svg`<path d="M9 2.500c-2-1-3 0-3.500 3L4 13c-.5 2.500-1.500 3.500-3 2.500M2 6.500h6M8 7.500c2-1 2.500 1 3 2.500s1.500 4 3.500 3M15.500 7l-7 7.500" stroke="#e4e4e4" stroke-width="1.500"/><path d="M17 12h3v3h-3z" fill="#eee"/>`)}
        </div>
        <div class="row">${icon(16, 16, svg`<path d="M.5.500h15v15H.5z" fill="#ddd" stroke="#eee"/><path d="M2 2h3v3H2zM8 2h3v3H8zM5 5h3v3H5zM11 5h3v3h-3zM2 8h3v3H2zM8 8h3v3H8zM5 11h3v3H5zM11 11h3v3h-3z" fill="#555"/>`)}
          <span class="combo g4"><select class="opacity" aria-label="Deckkraft"><option>100 %</option></select><span class="drop">${triRight()}</span></span></div>
      </div>
      <span class="rule g7"></span>
      <div class="wrap g4">
        <button class="pressed" aria-label="Kein Konturfluss">${icon(18, 18, svg`${wrapLines}<path d="M5 3v10M12 3v10" stroke="#e8e8e8"/>`)}</button>
        <button aria-label="Umfließen der Bounding Box">${icon(18, 18, svg`${wrapLines}<path d="M3 3.500h12v10H3z" fill="#444"/><path d="M5.500 4.500h7v8h-7z" fill="#777" stroke="#eee" stroke-width="1.500"/>`)}</button>
        <button aria-label="Umfließen der Objektform">${icon(18, 18, svg`${wrapLines}<circle cx="9" cy="8.500" r="6.500" fill="#444"/><circle cx="9" cy="8.500" r="5" fill="#ddd"/>`)}</button>
        <button aria-label="Objekt überspringen">${icon(18, 18, svg`<path d="M0 1.500h18M0 4h18M0 14h18M0 16.500h18" stroke="#e8e8e8" stroke-width="1.500"/><path d="M5 6h8v6H5z" fill="#ddd"/>`)}</button>
      </div>
      <span class="rule g7"></span>
      <div class="row g4">${icon(19, 18, svg`<path d="M3 3h13v12H3z" fill="#777" stroke="#eee" stroke-width="1.500"/><path d="M0 0h5v5H0zM14 0h5v5h-5zM0 13h5v5H0zM14 13h5v5h-5z" fill="#39b5ea"/>`)}</div>
      <div class="pair g7">
        <div class="row">${this.step(false)}<input class="num mid-num" aria-label="Eckengröße" .value=${"0,1667 Zoll"} /></div>
        <button class="combo" aria-label="Eckenform"><span class="val edge">${icon(24, 16, svg`<path d="M1 5.500h17v8" stroke="#111" stroke-width="1.500"/>`)}</span><span class="drop">${triDown()}</span></button>
      </div>
      <button class="flash mid" aria-label="Schnell anwenden">${icon(14, 20, svg`<path d="M9 0L1 11h5l-3 9 10-12H8l5-8z" fill="#e8e8e8"/><path d="M9 3L5 9" stroke="#666"/>`)}</button>
      ${this.popup()}
    </div>`;
  }

  private popup() {
    return html`<section class="pop" aria-label="Farbfelder">
      <div class="head">
        <button class="fs" aria-label="Fläche und Kontur">${icon(25, 24, fillStroke)}</button>
        <button class="fmt" aria-label="Rahmen">${icon(11, 11, svg`<path d="M1 1h9v9H1z" fill="#555" stroke="#e4e4e4" stroke-width="1.600"/>`)}</button>
        <button aria-label="Textformat">${icon(12, 13, svg`<path d="M0 0h12v4h-1c-.3-1.800-1-2.500-3-2.500V10c0 1.300.4 1.500 2 1.700V13H2v-1.300c1.600-.2 2-.4 2-1.700V1.500C2 1.500 1.300 2.200 1 4H0z" fill="#e4e4e4"/>`)}</button>
        <label for="tint">Farbton:</label><input class="tint" id="tint" .value=${"100"} /><button class="tintgo" aria-label="Farbtonregler">${triRight("#888")}</button>%
        <button class="menu" aria-label="Bedienfeldmenü">${icon(19, 12, svg`<path d="M0 3h6L3 6z" fill="#eee"/><path d="M7 1.500h11M7 4.500h11M7 7.500h11M7 10.500h11" stroke="#e4e4e4" stroke-width="1.500"/>`)}</button>
      </div>
      <div class="body">
        <ul class="list">
          ${swatches.map((s) => html`<li><button class=${classMap({ on: s.name === this.swatch })} @click=${() => (this.swatch = s.name)}>
            <span class="chip" style=${styleMap({ background: s.color === "none" ? "#fff" : s.color })}>${s.color === "none" ? icon(15, 15, svg`<path d="M1 14L14 1" stroke="#d8202a" stroke-width="3"/>`) : ""}</span>
            <span class=${classMap({ name: true, latin: !!s.latin })}>${s.name}</span>
            ${s.fixed ? icNoEdit : ""}${s.fixed && !s.process ? html`<span class="blank"></span>` : ""}${s.process ? icSpot : ""}${s.kind ?? ""}
          </button></li>`)}
        </ul>
        <div class="vbar"><button aria-label="Nach oben">${icon(9, 6, svg`<path d="M0 6h9L4.500 0z" fill="#eee"/>`)}</button><span class="void"></span><button aria-label="Nach unten">${icon(9, 6, svg`<path d="M0 0h9L4.500 6z" fill="#eee"/>`)}</button></div>
      </div>
      <div class="foot">
        <button class="first" aria-label="Zu Bibliothek">${icon(20, 15, svg`<path d="M5 14a4.500 4.500 0 0 1-1-8.500C5 1 12-1 14 4c4 0 6 3 5 6.500-.7 2.500-2.500 3.500-4 3.500z" fill="#d0d0d0"/><path d="M5 9.500h8M9.500 6l3.500 3.500-3.500 3.500" stroke="#333" stroke-width="1.800"/>`)}</button>
        <button aria-label="Ansicht">${icon(21, 14, svg`<path d="M0 0h13v13H0z" fill="#ddd"/><path d="M0 4.500h13M0 8.800h13M4.500 0v13M8.800 0v13" stroke="#444"/><path d="M14 10h7l-3.500 4z" fill="#eee"/>`)}</button>
        <button aria-label="Neue Farbgruppe">${icon(16, 13, svg`<path d="M0 2l1.500-2h5L8 2h8v11H0z" fill="#ccc"/><path d="M0 4h16" stroke="#999"/>`)}</button>
        <button aria-label="Neues Farbfeld">${icon(18, 13, svg`<path d="M4 0h13v13H9.500V5.500H4z" fill="#ddd"/><path d="M3 7h5v5z" fill="#eee"/>`)}</button>
        <button aria-label="Löschen">${icon(15, 15, svg`<path d="M0 3.500h15M5 3V1h5v2" stroke="#e0e0e0" stroke-width="1.500"/><path d="M2 5.500l1 9h9l1-9M5.500 6v8M7.500 6v8M9.500 6v8" stroke="#e0e0e0" stroke-width="1.400"/>`)}</button>
      </div>
      <span class="ring"></span>
    </section>`;
  }

  private toolbox() {
    return html`<aside class="toolbox">
      <button class="collapse" aria-label="Erweitern">${icon(9, 7, svg`<path d="M1 .5l3 3-3 3M5.500.500l3 3-3 3" stroke="#eee" stroke-width="1.400"/>`)}</button>
      <div class="tgrip"></div>
      ${toolGroups.map((g) => html`<div class="tools">${g.map((t) => html`<button aria-label=${t} class=${classMap({ active: t === this.tool })} @click=${() => (this.tool = t)}>${icon(30, 26, tools[t])}${t === this.tool ? html`<span class="mark"></span>` : ""}</button>`)}</div>`)}
      <div class="bottom">
        <button aria-label="Fläche und Kontur">${icon(25, 24, fillStroke)}</button>
        <button aria-label="Standardfläche und -kontur">${icon(15, 14, svg`<path d="M5 5h9v8H5z" fill="#000" stroke="#eee" stroke-width="1.500"/><path d="M1 1h8v8H1z" fill="#fff" stroke="#222"/><path d="M2 8l6-6" stroke="#d8202a" stroke-width="1.600"/>`)}</button>
        <span class="modes"><button aria-label="Rahmenformat">${icon(13, 13, svg`<path d="M0 0h13v13H0z" fill="#222"/><path d="M2.500 2.500h8v8h-8z" fill="#555" stroke="#ddd" stroke-width="1.500"/>`)}</button>
        <button aria-label="Textformat">${icon(12, 12, svg`<path d="M1 1h10v3h-1c-.3-1.300-.8-1.700-3-1.700V10c0 .8.400 1 1.500 1v1h-5v-1C4.600 11 5 10.800 5 10V2.300c-2.200 0-2.700.4-3 1.700H1z" fill="#999"/>`)}</button></span>
        <button class="well" aria-label="Farbe anwenden">${icon(16, 16, svg`<path d="M.5.500h15v15H.5z" fill="#d8202a" stroke="#888"/>`)}</button>
        <button class="well" aria-label="Bildschirmmodus">${icon(30, 26, svg`<path d="M8.500 6.500h13v12h-13z" stroke="#e4e4e4" stroke-width="1.600"/><path d="M10.500 9h6v4h-6zM14 12.500h6V17h-6z" fill="#ddd"/>${corner}`)}</button>
        <span class="brand">vortage</span>
      </div>
    </aside>`;
  }

  private document() {
    return html`<main class="doc">
      <div class="tabs"><div class="tab"><button aria-label="Dokument schließen">${icon(8, 8, svg`<path d="M1 1l6 6M7 1L1 7" stroke="#ddd" stroke-width="1.300"/>`)}</button><span>*letterhead-design.indd @ 100%</span></div></div>
      <div class="view-area">
        <div class="canvas">
          <div class="frame">
            <div class="textbox">
              <p><span class="line"><span>excesto volupti atibus, esto omnim hit quo es</span><span>impedia atem autaepe rerae-</span></span>
                <span class="line"><span>cusda dolupid untota nonsequ iatur? Rum est</span><span>atur, sunt res ex essitibust,</span></span>
                <span class="line"><span>sumendae qui te coratquae dolores ecatius e</span></span></p>
              <p><span class="line"><span>Ota nullore perspiciasit provit mo blaborecullab</span><span>cum quaturit asped ut aditatu</span></span>
                <span class="line"><span>scienia venimus et post, ut officiis cus eliberf</span><span>volupta eperovitatem quas.</span></span></p>
              <p>Henis at ventium faccatem qui occabor accab</p>
              <p class="sign">Sincerely,</p>
              <p>Name</p>
            </div>
            <div class="object">${icon(208, 24, svg`<path d="M5 5h198v14H5z" fill="#d42027" stroke="#6c1c2c"/><g fill="#fff" stroke="#5b9fd0"><path d="M1.500 1.500h7v7h-7zM1.500 8.500h7v7h-7zM1.500 15.500h7v7h-7zM100.500 1.500h7v7h-7zM100.500 15.500h7v7h-7zM199.500 1.500h7v7h-7zM199.500 8.500h7v7h-7zM199.500 15.500h7v7h-7z"/></g><path d="M160.500.500h8v8h-8z" fill="#3d8fe8" stroke="#3a7cc8"/>`)}</div>
          </div>
          <span class="guide"></span>
        </div>
        <div class="scroll"><button aria-label="Nach oben">${icon(11, 7, svg`<path d="M0 7h11L5.500 0z" fill="#eee"/>`)}</button><div class="thumb"></div></div>
      </div>
    </main>`;
  }

  private dock() {
    return html`<nav class="dock" aria-label="Bedienfelder"><div class="dockhead"></div>
      ${panels.map((g) => html`<div class="group"><span class="pgrip"></span>${g.map(([n, i]) => html`<button>${icon(25, 23, i)}<span>${n}</span></button>`)}</div>`)}
    </nav>`;
  }

  render() {
    return html`<div class="window">${this.titleBar()}${this.controlBar()}
      <div class="main">${this.toolbox()}${this.document()}${this.dock()}</div></div>`;
  }
}
